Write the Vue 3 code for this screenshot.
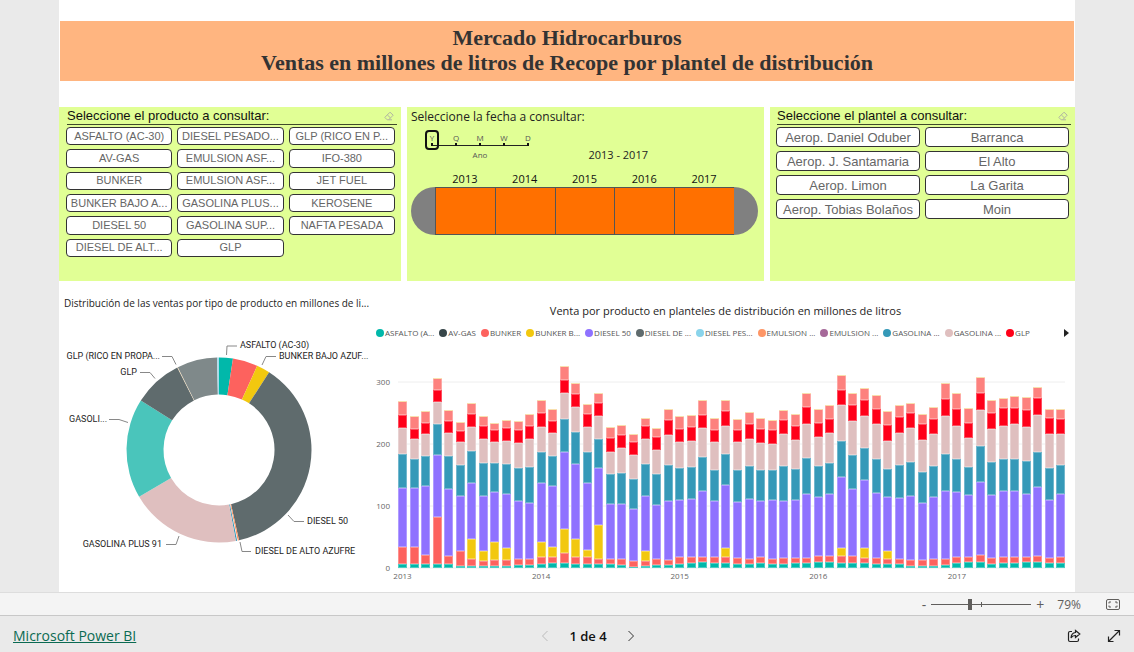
<script setup>
import { ref } from 'vue'

const products = [
  'ASFALTO (AC-30)', 'DIESEL PESADO...', 'GLP (RICO EN P...',
  'AV-GAS', 'EMULSION ASF...', 'IFO-380',
  'BUNKER', 'EMULSION ASF...', 'JET FUEL',
  'BUNKER BAJO A...', 'GASOLINA PLUS...', 'KEROSENE',
  'DIESEL 50', 'GASOLINA SUP...', 'NAFTA PESADA',
  'DIESEL DE ALT...', 'GLP',
]
const plants = [
  'Aerop. Daniel Oduber', 'Barranca',
  'Aerop. J. Santamaria', 'El Alto',
  'Aerop. Limon', 'La Garita',
  'Aerop. Tobias Bolaños', 'Moin',
]
const grains = ['Y', 'Q', 'M', 'W', 'D']
const years = [2013, 2014, 2015, 2016, 2017]
const grain = ref('Y')
const zoom = ref(38)

const legend = [
  ['ASFALTO (A...', '#01b8aa'], ['AV-GAS', '#374649'], ['BUNKER', '#fd625e'],
  ['BUNKER B...', '#f2c80f'], ['DIESEL 50', '#8f72ff'], ['DIESEL DE ...', '#5f6b6d'],
  ['DIESEL PES...', '#8ad4eb'], ['EMULSION ...', '#fe9666'], ['EMULSION ...', '#a66999'],
  ['GASOLINA ...', '#3599b8'], ['GASOLINA ...', '#dfbfbf'], ['GLP', '#ff0019'],
]

// Donut slices: end angle in degrees, clockwise from the top
const slices = [
  [8.7, '#01b8aa'], [24.4, '#fd625e'], [32.8, '#f2c80f'], [167.5, '#5f6b6d'],
  [168.4, '#fe9666'], [168.7, '#ffffff'], [169.5, '#3599b8'], [239.7, '#dfbfbf'],
  [302.3, '#4ac5bb'], [333.2, '#5f6b6d'], [333.6, '#f4d9b0'], [358.8, '#7f898a'], [360, '#a9dcec'],
]
const cx = 160
const cy = 130
const point = (r, deg) => {
  const a = (deg * Math.PI) / 180
  return `${(cx + r * Math.sin(a)).toFixed(2)} ${(cy - r * Math.cos(a)).toFixed(2)}`
}
const arcs = slices.map(([end, fill], i) => {
  const start = i ? slices[i - 1][0] : 0
  const big = end - start > 180 ? 1 : 0
  return {
    fill,
    d: `M${point(92.5, start)}A92.5 92.5 0 ${big} 1 ${point(92.5, end)}L${point(55.5, end)}A55.5 55.5 0 ${big} 0 ${point(55.5, start)}Z`,
  }
})
const donutLabels = [
  { x: 181, y: 28, t: 'ASFALTO (AC-30)', l: '167.5,35 168,26 178,26' },
  { x: 220, y: 39, t: 'BUNKER BAJO AZUF...', l: '203,45 207,36.5 217,36.5' },
  { x: 248, y: 204, t: 'DIESEL 50', l: '229,195 235,201.5 245,201.5' },
  { x: 196, y: 234, t: 'DIESEL DE ALTO AZUFRE', l: '181,222 183,231.5 192,231.5' },
  { x: 103, y: 227, t: 'GASOLINA PLUS 91', l: '120,216 117,224.5 107,224.5', end: true },
  { x: 48, y: 102, t: 'GASOLI...', l: '69,102.5 60,99.5 50,99.5', end: true },
  { x: 78, y: 55, t: 'GLP', l: '96,58.5 91,52.5 81,52.5', end: true },
  { x: 101, y: 39, t: 'GLP (RICO EN PROPA...', l: '117,44.5 113,36.5 103,36.5', end: true },
]

// Upper edge of each stacked series per month, in thirds of a plot unit from the top (744 = zero line)
const colors = ['#fd817e', '#ff0019', '#dfbfbf', '#3599b8', '#8f72ff', '#f2c80f', '#fd625e', '#01b8aa']
const months = [
  [244, 286, 324, 401, 503, 0, 682, 732], [288, 326, 357, 418, 505, 0, 682, 732],
  [273, 310, 343, 407, 499, 0, 706, 733], [175, 209, 247, 313, 406, 0, 592, 732],
  [271, 302, 340, 409, 507, 0, 709, 731], [305, 334, 367, 435, 527, 0, 694, 737],
  [248, 282, 322, 392, 488, 657, 716, 737], [289, 319, 358, 430, 529, 692, 722, 738],
  [308, 331, 367, 430, 515, 667, 719, 737], [301, 325, 364, 432, 523, 685, 719, 737],
  [304, 331, 370, 445, 544, 0, 716, 735], [281, 319, 358, 442, 548, 0, 718, 735],
  [240, 280, 321, 395, 490, 665, 711, 731], [268, 303, 340, 409, 499, 682, 712, 730],
  [137, 179, 219, 297, 395, 626, 699, 728], [189, 223, 262, 337, 433, 656, 711, 731],
  [253, 282, 322, 397, 490, 689, 712, 731], [218, 250, 287, 356, 445, 615, 716, 732],
  [320, 355, 395, 463, 553, 0, 716, 733], [316, 346, 385, 458, 553, 0, 718, 735],
  [342, 366, 405, 477, 568, 0, 724, 740], [295, 319, 358, 433, 527, 694, 722, 738],
  [325, 352, 391, 463, 556, 0, 718, 735], [267, 301, 346, 435, 544, 0, 721, 736],
  [289, 328, 366, 445, 541, 0, 712, 731], [286, 322, 362, 442, 536, 0, 712, 729],
  [241, 284, 323, 410, 514, 0, 710, 726], [295, 331, 367, 449, 543, 0, 712, 730],
  [241, 272, 317, 401, 496, 683, 712, 730], [297, 330, 367, 451, 546, 0, 715, 733],
  [277, 313, 356, 439, 536, 0, 718, 733], [293, 328, 368, 449, 543, 0, 712, 729],
  [301, 330, 371, 451, 541, 0, 718, 733], [271, 299, 342, 438, 543, 0, 715, 731],
  [283, 319, 361, 447, 541, 0, 713, 730], [219, 262, 311, 413, 522, 0, 713, 730],
  [268, 310, 352, 439, 531, 0, 709, 726], [255, 296, 340, 430, 521, 0, 707, 725],
  [164, 210, 254, 362, 470, 683, 709, 728], [220, 256, 302, 405, 508, 0, 709, 729],
  [205, 241, 287, 384, 480, 685, 713, 730], [226, 267, 313, 418, 520, 0, 715, 732],
  [274, 316, 362, 447, 532, 694, 716, 732], [255, 292, 338, 435, 534, 0, 718, 732],
  [248, 278, 324, 427, 528, 0, 721, 738], [283, 311, 359, 455, 550, 0, 719, 738],
  [260, 296, 342, 438, 532, 0, 716, 737], [188, 236, 289, 402, 514, 0, 716, 735],
  [218, 268, 318, 417, 517, 0, 710, 728], [265, 309, 354, 440, 525, 0, 710, 726],
  [170, 218, 269, 378, 486, 0, 706, 726], [241, 278, 326, 427, 525, 0, 713, 731],
  [235, 265, 318, 416, 513, 0, 711, 729], [229, 264, 313, 416, 514, 0, 711, 729],
  [232, 270, 320, 423, 522, 0, 711, 727], [200, 234, 286, 396, 501, 0, 707, 725],
  [267, 294, 342, 444, 541, 0, 713, 730], [266, 296, 343, 435, 523, 0, 712, 729],
]
const zero = 228
const toY = (v) => Math.round(zero - (744 - v) / 3)
const bars = months.map((edges, i) => {
  const segs = edges
    .map((v, k) => ({ v, fill: colors[k] }))
    .filter((s) => s.v)
    .map((s, k, all) => {
      const y = toY(s.v)
      const bottom = k + 1 < all.length ? toY(all[k + 1].v) : zero
      return { y, h: bottom - y, fill: s.fill }
    })
  return { x: Math.round(22 + i * 11.55), top: toY(edges[0]), segs }
})
const gridLines = [300, 200, 100, 0].map((v) => ({ v, y: zero - v * 0.62 }))
</script>

<template>
  <div class="app">
    <main class="stage">
      <div class="sheet">
        <h1 class="banner">Mercado Hidrocarburos<br>Ventas en millones de litros de Recope por plantel de distribución</h1>

        <div class="filters">
          <section class="panel slicer">
            <header class="slicer-head">
              <h2>Seleccione el producto a consultar:</h2>
              <button class="eraser" aria-label="Borrar selección">
                <svg viewBox="0 0 10 10" width="10" height="10"><path d="M1 6.2 6 1.2 9.2 4.2 4.6 8.8H3.2L1 6.6ZM3.4 4 6.6 7M4.6 8.8H8" /></svg>
              </button>
            </header>
            <div class="tiles three">
              <button v-for="(p, i) in products" :key="i" class="tile">{{ p }}</button>
            </div>
          </section>

          <section class="panel dates">
            <h2>Seleccione la fecha a consultar:</h2>
            <div class="period">
              <div class="grain">
                <div class="grain-steps">
                  <button v-for="g in grains" :key="g" :class="{ on: g === grain }" @click="grain = g">{{ g }}</button>
                </div>
                <span class="grain-name">Ano</span>
              </div>
              <span class="range-name">2013 - 2017</span>
            </div>
            <div class="years"><span v-for="y in years" :key="y">{{ y }}</span></div>
            <div class="timeline">
              <button class="cap left" aria-label="Inicio"></button>
              <button v-for="y in years" :key="y" class="cell" :aria-label="String(y)"></button>
              <button class="cap right" aria-label="Fin"></button>
            </div>
          </section>

          <section class="panel slicer plants">
            <header class="slicer-head">
              <h2>Seleccione el plantel a consultar:</h2>
              <button class="eraser" aria-label="Borrar selección">
                <svg viewBox="0 0 10 10" width="10" height="10"><path d="M1 6.2 6 1.2 9.2 4.2 4.6 8.8H3.2L1 6.6ZM3.4 4 6.6 7M4.6 8.8H8" /></svg>
              </button>
            </header>
            <div class="tiles two">
              <button v-for="p in plants" :key="p" class="tile">{{ p }}</button>
            </div>
          </section>
        </div>

        <div class="charts">
          <section class="donut">
            <h2>Distribución de las ventas por tipo de producto en millones de li...</h2>
            <svg viewBox="0 0 317 250">
              <path v-for="(a, i) in arcs" :key="i" :d="a.d" :fill="a.fill" />
              <g v-for="d in donutLabels" :key="d.t">
                <polyline :points="d.l" class="leader" />
                <text :x="d.x" :y="d.y" :text-anchor="d.end ? 'end' : 'start'">{{ d.t }}</text>
              </g>
            </svg>
          </section>

          <section class="columns">
            <h2>Venta por producto en planteles de distribución en millones de litros</h2>
            <div class="legend">
              <ul>
                <li v-for="([name, color], i) in legend" :key="i"><svg viewBox="0 0 8 8" width="8" height="8"><circle cx="4" cy="4" r="4" :fill="color" /></svg>{{ name }}</li>
              </ul>
              <button aria-label="Más"><svg viewBox="0 0 5 8" width="5" height="8"><path d="M0 0 5 4 0 8Z" fill="#222" /></svg></button>
            </div>
            <svg class="plot" viewBox="0 0 699 244">
              <g v-for="g in gridLines" :key="g.v">
                <line x1="22" x2="689" :y1="g.y" :y2="g.y" class="grid" />
                <text x="14" :y="g.y + 3" text-anchor="end">{{ g.v }}</text>
              </g>
              <g v-for="b in bars" :key="b.x">
                <rect v-for="(s, k) in b.segs" :key="k" :x="b.x" :y="s.y" width="9" :height="s.h" :fill="s.fill" />
                <rect v-for="(s, k) in b.segs" :key="'e' + k" :x="b.x + 0.5" :y="s.y + 0.5" width="8" :height="Math.max(s.h - 1, 1)" class="edge" />
                <rect :x="b.x" :y="b.top" width="9" height="1" class="crown" />
              </g>
              <text v-for="(y, i) in years" :key="y" :x="26.5 + i * 138.6" y="239" text-anchor="middle">{{ y }}</text>
            </svg>
          </section>
        </div>
      </div>
    </main>

    <div class="zoombar">
      <button aria-label="Alejar">-</button>
      <div class="slider">
        <input v-model="zoom" type="range" min="0" max="100" aria-label="Zoom">
        <i class="tick"></i>
      </div>
      <button aria-label="Acercar">+</button>
      <span class="percent">79%</span>
      <button class="fit" aria-label="Ajustar a la página">
        <svg viewBox="0 0 14 11" width="14" height="11"><rect x=".5" y=".5" width="13" height="10" rx="1.5" /><path d="M5 3H3V4.5M3 6.5V8H5M9 3H11V4.5M11 6.5V8H9" /></svg>
      </button>
    </div>

    <footer class="footer">
      <a href="#">Microsoft Power BI</a>
      <nav class="pager">
        <button class="off" aria-label="Anterior"><svg viewBox="0 0 8 12" width="8" height="12"><path d="M6.500 1 1.500 6 6.500 11" /></svg></button>
        <span>1 de 4</span>
        <button aria-label="Siguiente"><svg viewBox="0 0 8 12" width="8" height="12"><path d="M1.500 1 6.500 6 1.500 11" /></svg></button>
      </nav>
      <div class="actions">
        <button aria-label="Compartir"><svg viewBox="0 0 14 14" width="14" height="14"><path d="M5 2.500H3Q1.500 2.500 1.500 4V11Q1.500 12.500 3 12.500H10Q11.500 12.500 11.500 11V9.500M8.500 1.500 12.800 5 8.500 8.500V6.500Q5.500 6.300 4 9 4.300 3.900 8.500 3.500Z" /></svg></button>
        <button aria-label="Pantalla completa"><svg viewBox="0 0 14 14" width="14" height="14"><path d="M1.500 12.500 12.500 1.500M7.500 1.500H12.500V6.500M1.500 7.500V12.500H6.500" /></svg></button>
      </div>
    </footer>
  </div>
</template>

<style>
body { margin: 0; }
</style>

<style scoped>
* { box-sizing: border-box; }
.app {
  display: flex;
  flex-direction: column;
  min-height: 100vh;
  background: #eaeaea;
  font-family: "Open Sans", "Noto Sans", sans-serif;
  color: #252423;
}
h1, h2, ul { margin: 0; padding: 0; }
h2 { font-weight: 400; white-space: nowrap; }
button { padding: 0; border: 0; background: none; font: inherit; color: inherit; cursor: pointer; }
svg { display: block; }
.stage { flex: 1; display: flex; padding: 0 59px; }
.sheet { flex: 1; min-width: 0; background: #fff; padding-top: 21px; }
.banner {
  margin: 0 1px;
  padding: 4px 0 6px;
  background: #ffb580;
  color: #333;
  font: 700 22px/25px "Liberation Serif", serif;
  text-align: center;
}
.filters { display: grid; grid-template-columns: 342fr 357fr 305fr; gap: 6px; margin-top: 26px; }
.panel { height: 174px; background: #e1ff95; }
.slicer { padding: 0 6px 0 7px; font-family: "Liberation Sans", sans-serif; }
.slicer-head {
  display: flex;
  align-items: center;
  justify-content: space-between;
  height: 18px;
  margin: 0 -2px 2px 1px;
  border-bottom: 1px solid #3f4a2a;
}
.slicer-head h2 { font-size: 13px; color: #111; }
.eraser { margin-right: 3px; }
.eraser path { fill: none; stroke: #b0b5a2; stroke-width: 1; }
.tiles { display: grid; grid-auto-rows: 1fr; gap: 4px 5px; }
.three { grid-template-columns: repeat(3, minmax(0, 1fr)); height: 130px; }
.two { grid-template-columns: repeat(2, minmax(0, 1fr)); height: 92px; }
.tile {
  border: 1px solid #333;
  border-radius: 4px;
  background: #fff;
  color: #666;
  font-size: 11px;
  line-height: 15px;
  white-space: nowrap;
  overflow: hidden;
}
.plants { padding-left: 6px; }
.plants .tile { font-size: 13px; line-height: 17px; }

.dates { padding: 0 6px 0 4px; }
.dates h2 { font-size: 12px; line-height: 20px; color: #222; }
.period { display: flex; justify-content: space-between; margin-top: 3px; padding: 0 110px 0 14px; height: 33px; }
.grain { display: flex; flex-direction: column; align-items: center; font-size: 8px; color: #555; }
.grain-steps {
  display: flex;
  gap: 10px;
  background: linear-gradient(#222, #222) 7px 15px / 96px 1px no-repeat;
}
.grain-steps button { position: relative; width: 14px; height: 20px; padding: 3px 0 7px; line-height: 10px; }
.grain-steps button::after {
  content: "";
  position: absolute;
  left: 6px;
  top: 13px;
  width: 2px;
  height: 3px;
  background: #111;
}
.grain-steps .on { border: 2px solid #111; border-radius: 4px; padding: 1px 0 5px; }
.grain-steps .on::after { left: 4px; top: 11px; }
.grain-name { line-height: 10px; }
.range-name { align-self: flex-end; font-size: 11px; line-height: 16px; }
.years { display: flex; margin-top: 7px; padding: 0 24px; font-size: 11px; line-height: 17px; color: #111; }
.years span { flex: 1; text-align: center; }
.timeline { display: flex; height: 48px; }
.cap { width: 24px; background: #808080; }
.left { border-radius: 24px 0 0 24px; }
.right { border-radius: 0 24px 24px 0; }
.cell { flex: 1; background: #ff7000; border: solid #555; border-width: 1px 0 1px 1px; }

.charts { display: grid; grid-template-columns: minmax(0, 317fr) minmax(0, 699fr); }
.charts h2 { color: #252423; }
.donut h2 { margin: 14px 0 0 5px; font-size: 10px; line-height: 16px; }
.donut svg { width: 100%; margin-top: 9px; overflow: visible; }
.donut text { font: 9px Roboto, sans-serif; fill: #252423; }
.leader { fill: none; stroke: #888; stroke-width: 1; }
.columns h2 { margin-top: 22px; font-size: 11px; line-height: 16px; text-align: center; }
.legend { display: flex; align-items: center; justify-content: space-between; margin-top: 8px; padding-right: 6px; }
.legend ul { display: flex; gap: 5px; list-style: none; font-size: 8px; line-height: 12px; color: #555; white-space: nowrap; }
.legend li { display: flex; align-items: center; gap: 1px; }
.plot { width: 100%; margin-top: 1px; }
.plot text { font-size: 8px; fill: #666; }
.grid { stroke: #eee; stroke-width: 1; }
.edge { fill: none; stroke: #fff; stroke-opacity: 0.3; }
.crown { fill: #f8dfae; }

.zoombar {
  display: flex;
  align-items: center;
  justify-content: flex-end;
  height: 24px;
  padding-right: 14px;
  border-top: 1px solid #ddd;
  border-bottom: 1px solid #c8c8c8;
  background: #f4f4f4;
  color: #605e5c;
  font-size: 14px;
}
.slider { position: relative; width: 100px; height: 12px; margin: 0 5px; }
.slider input {
  display: block;
  width: 100%;
  height: 12px;
  margin: 0;
  appearance: none;
  background: linear-gradient(#605e5c, #605e5c) center / 100% 1px no-repeat;
}
.slider input::-webkit-slider-thumb { appearance: none; width: 4px; height: 11px; background: #605e5c; border: 0; }
.tick { position: absolute; left: 50px; top: 4px; width: 1px; height: 5px; background: #605e5c; }
.percent { margin: 0 25px 0 13px; font-size: 12px; }
.fit svg { fill: none; stroke: #605e5c; }

.footer {
  display: grid;
  grid-template-columns: 1fr auto 1fr;
  align-items: center;
  height: 36px;
  padding: 3px 13px 0;
  font-size: 14px;
}
.footer a { justify-self: start; color: #0b6a52; font-size: 14px; line-height: 18px; }
.pager { display: flex; align-items: center; gap: 20px; margin-left: 42px; }
.pager span { color: #111; font-size: 13px; font-weight: 600; }
.pager svg { fill: none; stroke: #333; }
.pager .off svg { stroke: #bbb; }
.actions { display: flex; gap: 26px; justify-self: end; }
.actions svg { fill: none; stroke: #222; stroke-width: 1.2; }
</style>
